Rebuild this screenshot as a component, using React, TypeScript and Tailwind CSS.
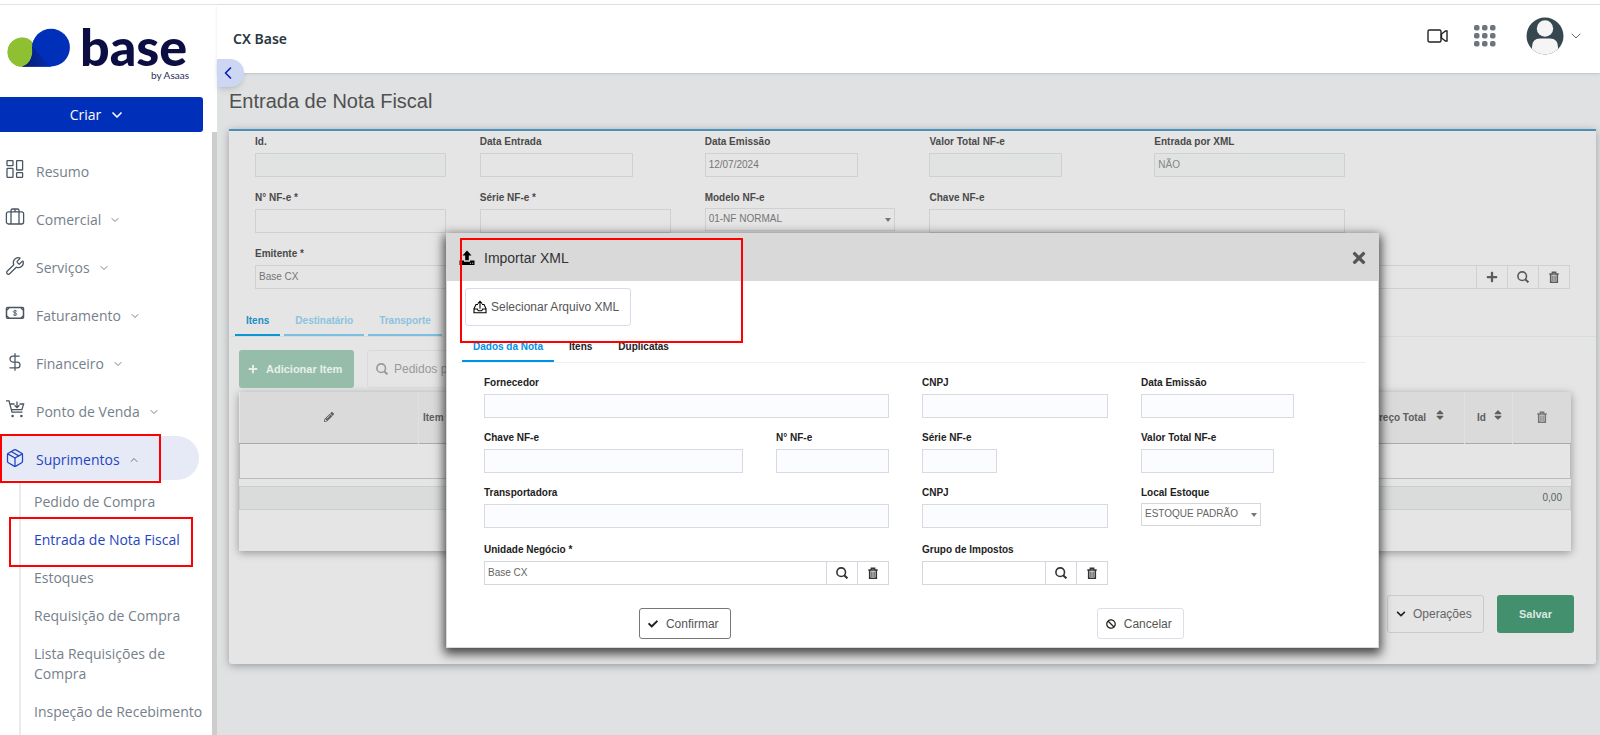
import React from 'react';
import { ChevronDown, ChevronLeft, ChevronUp, DollarSign, Package, Wrench } from 'lucide-react';
import { FaBan, FaCheck, FaChevronDown, FaPencilAlt, FaPlus, FaSort, FaTimes } from 'react-icons/fa';

const ResumoIcon = () => (
  <svg className="h-5 w-5" viewBox="0 0 20 20" fill="none" stroke="currentColor" strokeWidth="1.3">
    <rect x="2" y="0.6" width="6" height="5" rx="0.6" />
    <rect x="11.6" y="0.6" width="6" height="9.4" rx="0.6" />
    <rect x="2" y="8.4" width="6" height="9" rx="0.6" />
    <rect x="11.6" y="12.6" width="6" height="4.8" rx="0.6" />
  </svg>
);

const BriefcaseIcon = () => (
  <svg className="h-5 w-5" viewBox="0 0 20 20" fill="none" stroke="currentColor" strokeWidth="1.3">
    <rect x="1.4" y="3.8" width="17.2" height="12.2" rx="2" />
    <path d="M6 16V2.6a1.6 1.6 0 0 1 1.6-1.6h4.8A1.6 1.6 0 0 1 14 2.6V16M10 1v3" />
  </svg>
);

const BillIcon = () => (
  <svg className="h-5 w-5" viewBox="0 0 20 20" fill="none" stroke="currentColor" strokeWidth="1.5">
    <rect x="1.5" y="3.6" width="17" height="10.6" rx="1" />
    <path d="M2 6l2-2M18 6l-2-2M2 12l2 2M18 12l-2 2" strokeWidth="1.2" />
    <path d="M11.8 7.4c-.3-.6-1-.8-1.8-.8-1 0-1.7.4-1.7 1.1 0 1.6 3.5.8 3.5 2.4 0 .8-.8 1.2-1.8 1.2-.9 0-1.6-.3-1.9-.9M10 5.8v6.2" strokeWidth="0.9" />
  </svg>
);

const CartIcon = () => (
  <svg className="h-5 w-5" viewBox="0 0 20 20" fill="none" stroke="currentColor" strokeWidth="1.3">
    <path d="M1 0.8h3l3 11.4h10.5M5 4h4.500M14.500 4h4.100l-1.700 5.600H6.400" />
    <path d="M12 1.4v6M9.6 5.2l2.4 2.4 2.4-2.4" />
    <circle cx="7.6" cy="16" r="1.3" fill="currentColor" stroke="none" />
    <circle cx="16.4" cy="16" r="1.3" fill="currentColor" stroke="none" />
  </svg>
);

const SearchIcon = () => (
  <svg className="h-3 w-3" viewBox="0 0 12 12" fill="none" stroke="currentColor" strokeWidth="1.6">
    <circle cx="5.2" cy="5.2" r="4.3" />
    <path d="M8.2 8.2l3.200 3.200" strokeWidth="2" />
  </svg>
);

const TrashIcon = () => (
  <svg className="h-3 w-3" viewBox="0 0 12 12" fill="none" stroke="currentColor">
    <path d="M1.3 3h9.4M4.3 2.6V1.2h3.4v1.4" strokeWidth="1.4" />
    <path d="M2.7 3v8.2h6.6V3" strokeWidth="1.6" />
    <path d="M4.7 4.5v5.500M6 4.5v5.500M7.3 4.5v5.500" strokeWidth="0.8" />
  </svg>
);

const UploadIcon = () => (
  <svg className="h-4 w-4" viewBox="0 0 16 16" fill="currentColor">
    <path d="M8 0.5L12.500 5.500H9.800V10.200H6.200V5.500H3.500z" />
    <path fillRule="evenodd" d="M0.500 10.500H5v1.200h6v-1.200h4.500V15H0.500zM11 12.800v1h1v-1zM13.200 12.800v1h1v-1z" />
  </svg>
);

const OutboxIcon = () => (
  <svg className="h-3.5 w-3.5" viewBox="0 0 14 14" fill="none" stroke="currentColor" strokeWidth="1.1">
    <path d="M5 4.500H3L1 8.600v4.200h12V8.600l-2-4.100H9M1 9h3.300l1 1.700h3.400L9.700 9H13" />
    <path d="M7 8.800V1.500M4.800 3.600L7 1.300l2.200 2.300" />
  </svg>
);

const menuItems = [
  { label: 'Resumo', icon: ResumoIcon },
  { label: 'Comercial', icon: BriefcaseIcon, arrow: true },
  { label: 'Serviços', icon: () => <Wrench className="h-5 w-5" strokeWidth={1.5} />, arrow: true },
  { label: 'Faturamento', icon: BillIcon, arrow: true },
  { label: 'Financeiro', icon: () => <DollarSign className="h-5 w-5" strokeWidth={1.5} />, arrow: true },
  { label: 'Ponto de Venda', icon: CartIcon, arrow: true },
];

const subItems = [
  'Pedido de Compra',
  'Entrada de Nota Fiscal',
  'Estoques',
  'Requisição de Compra',
  'Lista Requisições de Compra',
  'Inspeção de Recebimento',
];

const Logo = () => (
  <svg className="h-[92px] w-[200px]" viewBox="0 5 200 92" role="img" aria-label="base by Asaas">
    <defs>
      <linearGradient id="fold" x1="0" y1="0.6" x2="1" y2="0.4">
        <stop offset="0" stopColor="#0a1a6e" />
        <stop offset="1" stopColor="#0030b9" />
      </linearGradient>
    </defs>
    <circle cx="22" cy="52.2" r="14.4" fill="#8fc031" />
    <path d="M22 66.500L34 40h17v26.500z" fill="#0030b9" />
    <path d="M22 66.500C30 65 34.500 56 32 45l19 21.500z" fill="url(#fold)" />
    <path d="M7.600 52.200a14.400 14.400 0 0 1 24.600-10.200C34.500 55 30 65 22 66.600a14.400 14.400 0 0 1-14.400-14.400z" fill="#8fc031" />
    <circle cx="51" cy="47.6" r="18.9" fill="#0030b9" />
    <path d="M22 66.500C30 65 33.500 56 32.200 46l18 20.500z" fill="url(#fold)" />
    <text x="80" y="66" fontSize="52" fontWeight="900" fill="#0b0d43" fontFamily="Lato, sans-serif">base</text>
    <text x="151" y="79" fontSize="10" fill="#2c2e5a" fontFamily="Lato, sans-serif">by Asaas</text>
  </svg>
);

const Sidebar = () => (
  <aside className="flex w-[217px] shrink-0 flex-col bg-white font-['Open_Sans',sans-serif] text-sm text-[#76808a]">
    <Logo />
    <button className="flex h-[35px] w-[203px] items-center justify-center gap-2 rounded-r-[3px] bg-[#002fb9] pr-2 text-white">
      Criar
      <ChevronDown className="h-4 w-4" strokeWidth={2.5} />
    </button>
    <div className="flex flex-1 flex-col border-r-[5px] border-[#cdcdcd] pt-4">
      <nav className="flex flex-col gap-1">
        {menuItems.map(({ label, icon: Icon, arrow }) => (
          <a key={label} href="#" className="flex h-11 items-center gap-[11px] pl-[5px]">
            <span className="text-[#495662]"><Icon /></span>
            <span className="flex items-center gap-2 pt-1">
              {label}
              {arrow && <ChevronDown className="h-3 w-3" />}
            </span>
          </a>
        ))}
        <div className="relative">
          <a href="#" className="mr-[13px] flex h-11 items-center gap-[11px] rounded-r-full bg-[#e6eaf7] pl-[5px] text-[#1f45c4]">
            <Package className="h-5 w-5" strokeWidth={1.5} />
            <span className="flex items-center gap-2 pt-1">
              Suprimentos
              <ChevronUp className="h-3 w-3 text-[#6c757d]" />
            </span>
          </a>
          <div className="pointer-events-none absolute -top-0.5 left-0 h-[49px] w-[161px] border-2 border-[#ff0000]" />
        </div>
      </nav>
      <ul className="mt-[3px] ml-[19px] flex-1 border-l-2 border-[#ebebeb] pl-[13px]">
        {subItems.map((item) => (
          <li key={item} className="relative">
            <a
              href="#"
              className={
                item === 'Entrada de Nota Fiscal'
                  ? 'block py-[9px] leading-5 text-[#1f45c4]'
                  : 'block py-[9px] leading-5'
              }
            >
              {item}
            </a>
            {item === 'Entrada de Nota Fiscal' && (
              <div className="pointer-events-none absolute -top-1 -left-[25px] h-[50px] w-[184px] border-2 border-[#ff0000]" />
            )}
          </li>
        ))}
      </ul>
    </div>
  </aside>
);

const Header = () => (
  <header className="relative z-10 flex h-[68px] items-center justify-between bg-white pr-4 pl-4 shadow-sm">
    <strong className="font-['Noto_Sans',sans-serif] text-sm font-semibold text-[#2b3742]">CX Base</strong>
    <div className="flex items-center pb-1.5">
      <button aria-label="Vídeos">
        <svg className="h-4 w-[21px]" viewBox="0 0 21 16" fill="none" stroke="#222" strokeWidth="1.4">
          <rect x="1" y="2" width="13" height="12" rx="1.5" />
          <path d="M14.500 6l4-3h1.500v10h-1.500l-4-3z" />
        </svg>
      </button>
      <button aria-label="Aplicativos" className="ml-[26px]">
        <svg className="h-[22px] w-[22px]" viewBox="0 0 22 22" fill="#6c757d">
          {[0, 8, 16].map((y) =>
            [0, 8, 16].map((x) => <rect key={`${x}-${y}`} x={x} y={y} width="5.5" height="5.5" rx="2" />)
          )}
        </svg>
      </button>
      <button aria-label="Conta" className="ml-[30px] flex items-center gap-1">
        <svg className="h-[38px] w-[38px]" viewBox="0 0 38 38">
          <clipPath id="avatar"><circle cx="19" cy="19" r="18.5" /></clipPath>
          <g clipPath="url(#avatar)">
            <rect width="38" height="38" fill="#37474f" />
            <circle cx="19" cy="11.5" r="8.2" fill="#f5f5f5" />
            <path d="M6 38V30q0-8.500 8-8.500h10q8 0 8 8.500v8z" fill="#f5f5f5" />
          </g>
        </svg>
        <ChevronDown className="h-4 w-4 text-[#5c6670]" strokeWidth={1.5} />
      </button>
    </div>
    <button
      aria-label="Recolher menu"
      className="absolute top-[54px] left-0 flex h-7 w-[27px] items-center rounded-r-full bg-[#cdd7f3] pl-px text-[#0a1fb4] shadow-md"
    >
      <ChevronLeft className="h-5 w-5" />
    </button>
  </header>
);

const Field = ({ id, label, className, width = 'w-full', children, tone, value, readOnly }: {
  id: string;
  label: string;
  className?: string;
  width?: string;
  children?: React.ReactNode;
  tone: string;
  value?: string;
  readOnly?: boolean;
}) => (
  <div className={className}>
    <label htmlFor={id} className="block text-[10px] leading-[14px] font-bold">{label}</label>
    <div className="mt-1 flex h-6">
      <input
        id={id}
        defaultValue={value}
        readOnly={readOnly}
        className={`${width} ${tone} min-w-0 border px-[3px] pb-0.5 text-[10px]`}
      />
      {children}
    </div>
  </div>
);

const SelectField = ({ id, label, option, width, tone, className }: {
  id: string;
  label: string;
  option: string;
  width: string;
  tone: string;
  className?: string;
}) => (
  <div className={className}>
    <label htmlFor={id} className="block text-[10px] leading-[14px] font-bold">{label}</label>
    <div className={`${width} relative mt-[3px] h-[23px]`}>
      <select id={id} className={`${tone} block h-full w-full appearance-none border pr-4 pb-0.5 pl-[3px] text-[10px]`}>
        <option>{option}</option>
      </select>
      <svg className="pointer-events-none absolute top-2.5 right-1 h-1 w-1.5" viewBox="0 0 6 4" fill="#777">
        <path d="M0 0h6L3 4z" />
      </svg>
    </div>
  </div>
);

const AddonButton = ({ label, tone, children }: { label: string; tone: string; children: React.ReactNode }) => (
  <button aria-label={label} className={`${tone} flex w-[31px] shrink-0 items-center justify-center border border-l-0`}>
    {children}
  </button>
);

const pageTone = 'border-[#cfd0d2] bg-[#e5e5e5] text-[#757575]';
const pageAddon = 'border-[#cfd0d2] bg-[#e5e5e5] text-[#5c5c5c]';
const pageReadOnly = 'border-[#cfd0d2] bg-[#e0e3e2] text-[#858585]';
const modalTone = 'border-[#d5d7df] bg-white text-[#666]';
const modalAddon = 'border-[#d5d7df] bg-white text-[#333]';
const modalReadOnly = 'border-[#d8dade] bg-[#fbfcff] text-[#666]';

const ItemsTable = () => (
  <div className="mt-1 mr-[25px] ml-2.5 h-[159px] bg-[#e5e5e5] shadow-[0_2px_8px_rgba(0,0,0,0.35)]">
    <table className="w-full table-fixed border-collapse text-[10px] text-[#5e5e5e]">
      <thead>
        <tr className="h-[51px] border-b border-[#aaa] bg-[#dadada]">
          <th className="w-[179px] border-r border-[#e0e0e0]">
            <FaPencilAlt className="mx-auto h-2.5 w-2.5" aria-label="Editar" />
          </th>
          <th className="pl-1 text-left">Item</th>
          <th className="w-[220px] border-r border-[#e0e0e0]">
            <span className="flex items-center justify-end gap-2 pr-[18px]">
              Preço Total <FaSort className="mb-1 h-3 w-3" />
            </span>
          </th>
          <th className="w-12 border-r border-[#e0e0e0]">
            <span className="flex items-center justify-center gap-1.5 pl-1">
              Id <FaSort className="mb-1 h-3 w-3" />
            </span>
          </th>
          <th className="w-[58px]">
            <span className="flex justify-center opacity-80"><TrashIcon /></span>
          </th>
        </tr>
      </thead>
      <tbody>
        <tr className="h-[35px] border border-[#bcbcbc]"><td colSpan={5} /></tr>
        <tr className="h-2"><td colSpan={5} /></tr>
      </tbody>
      <tfoot>
        <tr className="h-[23px] border border-[#cccecd] bg-[#dadcdb]">
          <td colSpan={5} className="pr-2 text-right">0,00</td>
        </tr>
      </tfoot>
    </table>
  </div>
);

const ImportModal = () => (
  <section
    role="dialog"
    aria-labelledby="import-title"
    className="absolute top-[228px] right-[221px] left-[229px] z-20 border border-[#d9d9d9] bg-white pb-2 text-[#222] shadow-[0_4px_10px_2px_rgba(0,0,0,0.7)]"
  >
    <div className="flex h-[47px] items-center justify-between bg-[#d9d9d9] px-3">
      <h2 id="import-title" className="flex items-center gap-[9px] text-sm text-[#333]">
        <span className="text-black"><UploadIcon /></span>
        Importar XML
      </h2>
      <button aria-label="Fechar" className="text-[#555]"><FaTimes className="h-[18px] w-[14px]" /></button>
    </div>
    <button className="mt-[7px] ml-[18px] flex h-[38px] w-[166px] items-center gap-1 rounded-[3px] border border-[#d9dce8] pl-[7px] text-xs text-[#555]">
      <span className="text-black"><OutboxIcon /></span>
      Selecionar Arquivo XML
    </button>
    <div role="tablist" className="mt-[7px] mr-3 ml-[11px] flex gap-1 border-b border-[#e9f3f3] pl-1 text-[10px] font-bold">
      <button role="tab" aria-selected="true" className="h-[29px] border-b-2 border-[#0091ea] px-[11px] text-[#0091ea]">
        Dados da Nota
      </button>
      <button role="tab" className="h-[29px] border-b-2 border-transparent px-[11px]">Itens</button>
      <button role="tab" className="h-[29px] border-b-2 border-transparent px-[11px]">Duplicatas</button>
    </div>

    <div className="mt-[13px] grid grid-cols-12 gap-x-[33px] gap-y-[13px] pr-[51px] pl-[37px]">
      <Field id="fornecedor" label="Fornecedor" className="col-span-6" tone={modalReadOnly} readOnly />
      <Field id="cnpj-fornecedor" label="CNPJ" className="col-span-3" tone={modalReadOnly} readOnly />
      <Field id="xml-emissao" label="Data Emissão" className="col-span-3" width="w-[153px]" tone={modalReadOnly} readOnly />

      <Field id="xml-chave" label="Chave NF-e" className="col-span-4" tone={modalReadOnly} readOnly />
      <Field id="xml-numero" label="N° NF-e" className="col-span-2" tone={modalReadOnly} readOnly />
      <Field id="xml-serie" label="Série NF-e" className="col-span-3" width="w-[75px]" tone={modalReadOnly} readOnly />
      <Field id="xml-valor" label="Valor Total NF-e" className="col-span-3" width="w-[133px]" tone={modalReadOnly} readOnly />

      <Field id="transportadora" label="Transportadora" className="col-span-6" tone={modalReadOnly} readOnly />
      <Field id="cnpj-transportadora" label="CNPJ" className="col-span-3" tone={modalReadOnly} readOnly />
      <SelectField id="estoque" label="Local Estoque" option="ESTOQUE PADRÃO" className="col-span-3" width="w-[120px]" tone={modalTone} />
    </div>
    <div className="mt-[15px] grid grid-cols-12 gap-x-[33px] pr-[51px] pl-[37px]">
      <Field id="unidade" label="Unidade Negócio *" className="col-span-6" tone={modalTone} value="Base CX">
        <AddonButton label="Buscar unidade" tone={modalAddon}><SearchIcon /></AddonButton>
        <AddonButton label="Limpar unidade" tone={modalAddon}><TrashIcon /></AddonButton>
      </Field>
      <Field id="impostos" label="Grupo de Impostos" className="col-span-3" tone={modalTone}>
        <AddonButton label="Buscar grupo" tone={modalAddon}><SearchIcon /></AddonButton>
        <AddonButton label="Limpar grupo" tone={modalAddon}><TrashIcon /></AddonButton>
      </Field>
    </div>

    <div className="mt-[23px] grid grid-cols-2 justify-items-center px-2.5 text-xs text-[#555]">
      <button className="flex h-[31px] items-center gap-2 rounded-[3px] border border-[#777] pr-[11px] pl-2">
        <FaCheck className="h-2.5 w-2.5 text-[#222]" />
        Confirmar
      </button>
      <button className="flex h-[31px] items-center gap-2 rounded-[3px] border border-[#dcdfea] pr-[11px] pl-2">
        <FaBan className="h-2.5 w-2.5 text-[#222]" />
        Cancelar
      </button>
    </div>

    <div className="pointer-events-none absolute top-1 left-[13px] h-[105px] w-[283px] border-2 border-[#ff0000]" />
  </section>
);

const InvoiceCard = () => (
  <div className="rounded-b-[3px] border-t-2 border-[#4a90b8] bg-[#e5e5e5] pb-[31px] text-[#4a4a4a] shadow-[0_2px_8px_rgba(0,0,0,0.3)]">
    <div className="grid grid-cols-6 gap-x-[34px] gap-y-3.5 px-[26px] pt-1">
      <Field id="id" label="Id." tone={pageReadOnly} readOnly />
      <Field id="entrada" label="Data Entrada" width="w-[153px]" tone={pageTone} />
      <Field id="emissao" label="Data Emissão" width="w-[153px]" tone={pageTone} value="12/07/2024" />
      <Field id="valor" label="Valor Total NF-e" width="w-[133px]" tone={pageReadOnly} readOnly />
      <Field id="por-xml" label="Entrada por XML" className="col-span-2" width="w-[191px]" tone={pageReadOnly} value="NÃO" readOnly />

      <Field id="numero" label="N° NF-e *" tone={pageTone} />
      <Field id="serie" label="Série NF-e *" tone={pageTone} />
      <SelectField id="modelo" label="Modelo NF-e" option="01-NF NORMAL" width="w-full" tone={pageTone} />
      <Field id="chave" label="Chave NF-e" className="col-span-2" tone={pageTone} />

      <Field id="emitente" label="Emitente *" className="col-span-6" tone={pageTone} value="Base CX">
        <AddonButton label="Adicionar emitente" tone={pageAddon}><FaPlus className="h-3 w-3" /></AddonButton>
        <AddonButton label="Buscar emitente" tone={pageAddon}><SearchIcon /></AddonButton>
        <AddonButton label="Limpar emitente" tone={pageAddon}><TrashIcon /></AddonButton>
      </Field>
    </div>

    <div role="tablist" className="mt-[17px] ml-0.5 flex gap-1 border-b border-[#d5dcdd] pl-1 text-[10px] font-bold">
      <button role="tab" aria-selected="true" className="h-[30px] border-b-2 border-[#0d94d2] px-[11px] text-[#1a8fc4]">Itens</button>
      <button role="tab" className="h-[30px] border-b-2 border-[#7dbfe0] px-[11px] text-[#8cc3de]">Destinatário</button>
      <button role="tab" className="h-[30px] border-b-2 border-[#7dbfe0] px-[11px] text-[#8cc3de]">Transporte</button>
    </div>

    <div className="mt-[13px] ml-2.5 flex gap-[13px]">
      <button className="flex h-[38px] w-[115px] items-center gap-2 rounded-[3px] bg-[#95bda9] pl-[9px] text-[11px] font-bold text-[#e8efeb]">
        <FaPlus className="h-2.5 w-2.5" />
        Adicionar Item
      </button>
      <button className="flex h-[38px] items-center gap-1.5 rounded-[3px] border border-[#d9d9d9] px-2 text-xs text-[#999]">
        <SearchIcon />
        Pedidos pendentes
      </button>
    </div>

    <ItemsTable />

    <div className="mt-11 mr-[22px] flex justify-end gap-[13px]">
      <button className="flex h-[38px] w-[97px] items-center gap-[7px] rounded-[3px] border border-[#cbcbcb] pl-2 text-xs text-[#666]">
        <FaChevronDown className="h-2.5 w-2.5 text-[#222]" />
        Operações
      </button>
      <button className="h-[38px] w-[77px] rounded-[3px] bg-[#42906d] text-[11px] font-bold text-[#dbe8e1]">Salvar</button>
    </div>
  </div>
);

const App = () => {
  return (
    <div className="flex min-h-screen flex-col bg-white font-['Liberation_Sans',sans-serif]">
      <div className="h-[5px] border-b border-[#e3e3e3]" />
      <div className="flex flex-1">
        <Sidebar />
        <main className="relative min-w-0 flex-1 bg-[#dfe1e2]">
          <Header />
          <div className="pr-1 pl-3">
            <h1 className="flex h-14 items-center text-xl text-[#505050]">Entrada de Nota Fiscal</h1>
            <InvoiceCard />
          </div>
          <ImportModal />
        </main>
      </div>
    </div>
  );
};

export default App;
